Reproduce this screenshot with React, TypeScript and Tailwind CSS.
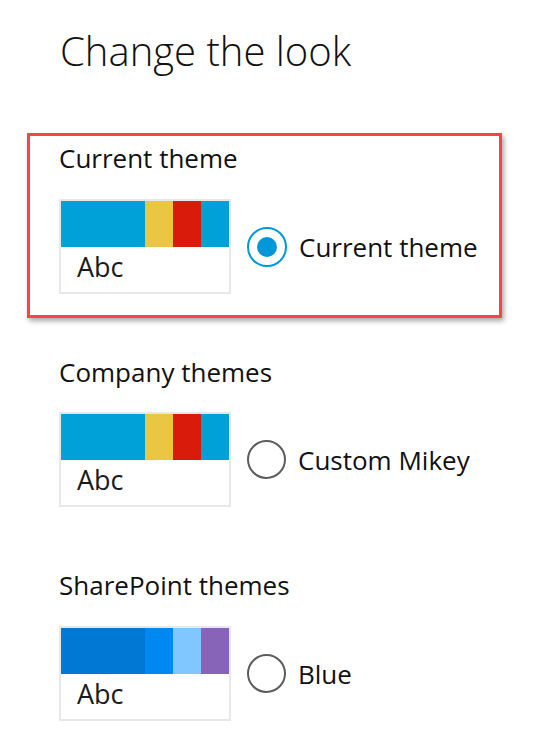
import React from 'react';

type Theme = {
  name: string;
  colors: { c: string; w: string }[];
  checked?: boolean;
};

const Swatch = ({ theme }: { theme: Theme }) => (
  <div className="w-[172px] h-[95px] border-2 border-[#e8e8e8] bg-white flex flex-col">
    <div className="flex h-[46px]">
      {theme.colors.map((seg, i) => (
        <div key={i} className={`h-full ${seg.w}`} style={{ backgroundColor: seg.c }} />
      ))}
    </div>
    <div className="pl-[16px] pt-[4px] text-[27px] leading-[32px] text-[#1b1b1b]">Abc</div>
  </div>
);

const Radio = ({ checked }: { checked?: boolean }) =>
  checked ? (
    <div className="w-[40px] h-[40px] rounded-full border-2 border-[#0098d8] flex items-center justify-center">
      <div className="w-[20px] h-[20px] rounded-full bg-[#0098d8]" />
    </div>
  ) : (
    <div className="w-[39px] h-[39px] rounded-full border-2 border-[#5c5c5c]" />
  );

const ThemeRow = ({ theme }: { theme: Theme }) => (
  <div className="flex items-center">
    <Swatch theme={theme} />
    <div className="ml-[16px]">
      <Radio checked={theme.checked} />
    </div>
    <span className="ml-[12px] text-[26px] leading-[32px] text-[#111]">{theme.name}</span>
  </div>
);

const office = [
  { c: '#00a0d9', w: 'w-[84px]' },
  { c: '#ebc642', w: 'w-[28px]' },
  { c: '#d91b0c', w: 'w-[28px]' },
  { c: '#00a0d9', w: 'w-[28px]' },
];

const blue = [
  { c: '#0078d4', w: 'w-[84px]' },
  { c: '#0088f2', w: 'w-[28px]' },
  { c: '#80c6ff', w: 'w-[28px]' },
  { c: '#8764b8', w: 'w-[28px]' },
];

export default function App() {
  return (
    <div className="w-[557px] h-[739px] bg-white overflow-hidden font-['Open_Sans',sans-serif] text-[#111]">
      <h1 className="pl-[60px] pt-[31px] text-[40px] leading-[40px] font-light">Change the look</h1>

      <div className="ml-[27px] mt-[62px] w-[475px] border-[3px] border-[#f04747] shadow-[2px_3px_5px_rgba(0,0,0,0.35)] pl-[29px] pt-[6px] pb-[21px]">
        <div className="text-[26px] leading-[32px] mb-[25px]">Current theme</div>
        <ThemeRow theme={{ name: 'Current theme', colors: office, checked: true }} />
      </div>

      <div className="pl-[59px] mt-[38px]">
        <div className="text-[26px] leading-[32px] mb-[24px]">Company themes</div>
        <ThemeRow theme={{ name: 'Custom Mikey', colors: office }} />
      </div>

      <div className="pl-[59px] mt-[62px]">
        <div className="text-[26px] leading-[32px] mb-[25px]">SharePoint themes</div>
        <ThemeRow theme={{ name: 'Blue', colors: blue }} />
      </div>
    </div>
  );
}
